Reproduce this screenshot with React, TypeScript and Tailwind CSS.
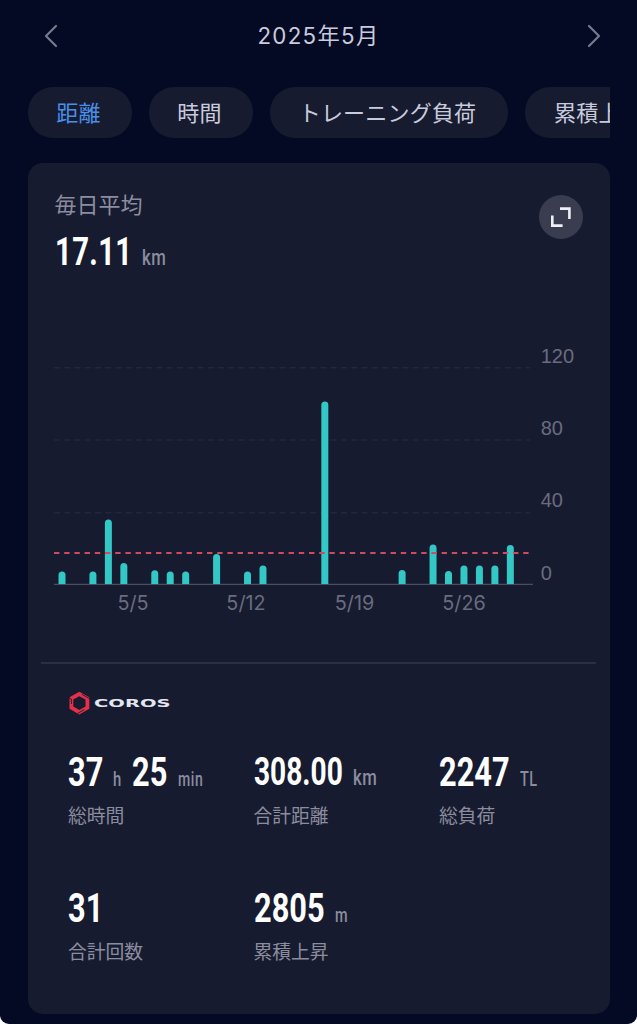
import { ChevronLeft, ChevronRight } from 'lucide-react';

const tabs = [
    { label: '距離', width: 'w-[104px]', active: true },
    { label: '時間', width: 'w-[104px]' },
    { label: 'トレーニング負荷', width: 'w-[238px]' },
    { label: '累積上昇', width: 'w-[150px]' },
];

// [day of month, bar height in px]
const bars = [
    [1, 12.5], [3, 12.5], [4, 64.5], [5, 21], [7, 13.7], [8, 12.5], [9, 12.5], [11, 30], [13, 12.5], [14, 18.5],
    [18, 182.5], [23, 14], [25, 39.5], [26, 13], [27, 18.5], [28, 18.5], [29, 18.5], [30, 39],
];

const yTicks = [
    { label: '120', y: 28 },
    { label: '80', y: 100.3 },
    { label: '40', y: 172.8 },
    { label: '0', y: 245.3 },
];

const xTicks = [
    { label: '5/5', x: 79 },
    { label: '5/12', x: 192 },
    { label: '5/19', x: 300.5 },
    { label: '5/26', x: 410 },
];

interface NumProps {
    value: string;
    width: string;
    size?: string;
}

const Num = ({ value, width, size = 'text-[41px] scale-x-[0.75]' }: NumProps) => (
    <span className={`${width} shrink-0 whitespace-nowrap text-white`}>
        <span className={`inline-block origin-left font-bold leading-[44px] ${size}`}>{value}</span>
    </span>
);

const Unit = ({ value, width = '', size = 'text-[22px] scale-x-[0.76]' }: { value: string; width?: string; size?: string }) => (
    <span className={`${width} shrink-0 whitespace-nowrap text-[#8b8d9f]`}>
        <span className={`inline-block origin-left font-medium leading-[24px] tracking-[0.8px] ${size}`}>{value}</span>
    </span>
);

const Caption = ({ children }: { children: string }) => (
    <div className="mt-[9px] text-[18.8px] leading-[28px] text-[#8b8d9f]">{children}</div>
);

const Chart = () => (
    <svg width="540" height="290" viewBox="0 0 540 290" className="block">
        {[27.7, 100, 172.7].map((y) => (
            <line key={y} x1="0" x2="476" y1={y} y2={y} stroke="#22273b" strokeWidth="1.4" strokeDasharray="6 4.25" />
        ))}
        <line x1="0" x2="479" y1="244.3" y2="244.3" stroke="#4b4e61" strokeWidth="1.3" />
        {bars.map(([day, h]) => {
            const x = 8 + (day - 1) * 15.46 - 3.5;
            const top = 244 - h;
            return (
                <path
                    key={day}
                    d={`M${x} 244V${top + 3.5}a3.5 3.5 0 0 1 7 0V244Z`}
                    fill="#33c7c6"
                />
            );
        })}
        <line x1="0" x2="476" y1="213" y2="213" stroke="#cf4a5f" strokeWidth="2" strokeDasharray="5.4 4.8" />
        {yTicks.map((t) => (
            <text key={t.label} x="486.7" y={t.y - 5.5} fill="#6a6c7e" className="font-['Liberation_Sans'] text-[20px]">
                {t.label}
            </text>
        ))}
        {xTicks.map((t) => (
            <text key={t.label} x={t.x} y="270" fill="#6a6c7e" textAnchor="middle" className="font-[Inter] text-[19.8px]">
                {t.label}
            </text>
        ))}
    </svg>
);

const Logo = () => (
    <div className="flex h-[24px] items-center">
        <svg width="23" height="24" viewBox="0 0 23 24" fill="none" className="shrink-0">
            <path d="M11.3 3L19.4 7.4V16.6L11.3 21.2L3.4 16.6V7.4Z" stroke="#e6304a" strokeWidth="3.8" />
            {/* short slits at the tips of the blades */}
            <g stroke="#171b30" strokeWidth="0.9">
                <path d="M0.6 6.4L3.4 8.2V13" />
                <path d="M14 3.4L21.8 7.8" />
                <path d="M9.6 22.4L16.4 18.6" />
            </g>
        </svg>
        <span className="relative top-[1px] ml-[3px] inline-block origin-left scale-x-[1.84] font-['DejaVu_Sans'] text-[10.6px] font-bold leading-none text-[#e4e6f1]">COROS</span>
    </div>
);

const App = () => {
    return (
        <div className="h-[1024px] w-[637px] overflow-hidden rounded-b-[9px] bg-[#050a24] font-['Roboto','Noto_Sans_CJK_JP',sans-serif]">
            {/* Month switcher */}
            <header className="flex h-[72px] items-center justify-between pl-[31px] pr-[23px]">
                <ChevronLeft size={40} strokeWidth={1.3} className="text-[#777a8d]" />
                <h1 className="-ml-[8px] font-['Inter','Noto_Sans_CJK_JP',sans-serif] text-[22.3px] tracking-[1.3px] text-[#c9cbdc]">2025年5月</h1>
                <ChevronRight size={40} strokeWidth={1.3} className="text-[#777a8d]" />
            </header>

            {/* Metric tabs */}
            <nav className="ml-[27.5px] mt-[14.5px] flex w-[582px] gap-[17px] overflow-hidden">
                {tabs.map((tab) => (
                    <button
                        key={tab.label}
                        className={`${tab.width} h-[51px] shrink-0 rounded-[25px] bg-[#171b30] pb-[3px] pr-[2px] font-['Noto_Sans_CJK_JP',sans-serif] text-[22px] leading-none tracking-[0.2px] ${tab.active ? 'text-[#4a90e8]' : 'text-[#c9cbdc]'}`}
                    >
                        {tab.label}
                    </button>
                ))}
            </nav>

            <main className="ml-[27.5px] mt-[25.5px] flex h-[851px] w-[582px] flex-col rounded-[15px] bg-[#171b30]">
                <div className="flex h-[177px] justify-between pl-[27px] pr-[27px] pt-[26px]">
                    <div>
                        <div className="pt-px text-[22px] leading-[32px] text-[#8b8d9f]">毎日平均</div>
                        <div className="mt-[8px] flex items-baseline">
                            <Num value="17.11" width="w-[87px]" size="text-[39.5px] scale-x-[0.74] tracking-[0.5px]" />
                            <Unit value="km" />
                        </div>
                    </div>
                    <button className="mt-[6px] flex size-[44px] items-center justify-center rounded-full bg-[#3a3d50]">
                        <svg width="22" height="22" viewBox="0 0 22 22" fill="none" stroke="#eef0f8" strokeWidth="2.6">
                            <path d="M10 2.6H19.4V13" />
                            <path d="M2.3 9.6V19.6H12.6" />
                        </svg>
                    </button>
                </div>

                <div className="h-[290px] pl-[26.5px]">
                    <Chart />
                </div>

                <div className="mx-[13.5px] mt-[31.5px] h-[2px] bg-[#2b2f45]" />

                <div className="pl-[40.5px] pt-[27px]">
                    <Logo />
                    <div className="mt-[35px] grid grid-cols-[185.5px_185.5px_1fr] gap-y-[55px]">
                        <div>
                            <div className="flex items-baseline">
                                <Num value="37" width="w-[45px]" />
                                <Unit value="h" width="w-[19px]" size="text-[19.5px] scale-x-[0.76]" />
                                <Num value="25" width="w-[46px]" />
                                <Unit value="min" size="text-[19.5px] scale-x-[0.72]" />
                            </div>
                            <Caption>総時間</Caption>
                        </div>
                        <div>
                            <div className="flex items-baseline">
                                <Num value="308.00" width="w-[99.5px]" size="text-[38.5px] scale-x-[0.73]" />
                                <Unit value="km" />
                            </div>
                            <Caption>合計距離</Caption>
                        </div>
                        <div>
                            <div className="flex items-baseline">
                                <Num value="2247" width="w-[81px]" />
                                <Unit value="TL" size="text-[20px] scale-x-[0.72]" />
                            </div>
                            <Caption>総負荷</Caption>
                        </div>
                        <div>
                            <Num value="31" width="w-[45px]" />
                            <Caption>合計回数</Caption>
                        </div>
                        <div>
                            <div className="flex items-baseline">
                                <Num value="2805" width="w-[81px]" />
                                <Unit value="m" size="text-[19.5px] scale-x-[0.74]" />
                            </div>
                            <Caption>累積上昇</Caption>
                        </div>
                    </div>
                </div>
            </main>
        </div>
    );
};

export default App;
